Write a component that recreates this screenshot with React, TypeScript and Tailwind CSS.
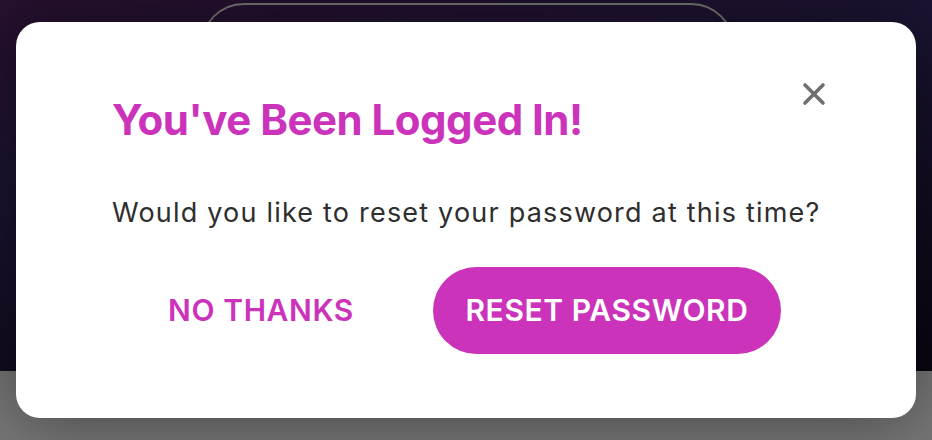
import { X } from "lucide-react";

export default function App() {
  const font = { fontFamily: "Inter, 'Noto Sans', sans-serif" };

  return (
    <div className="relative h-[440px] w-full overflow-hidden" style={font}>
      {/* page behind the dialog */}
      <div className="flex h-full flex-col">
        <div className="h-[371px] bg-[linear-gradient(170deg,#28102f_0%,#1b1433_35%,#0a0510_100%)] pl-[200px] pt-[3px]">
          <div className="h-[200px] w-[535px] rounded-[44px] border-2 border-[#767676]" />
        </div>
        <div className="flex-1 bg-[#777777]" />
      </div>

      {/* dialog */}
      <div className="absolute left-4 top-[22px] h-[396px] w-[900px] rounded-3xl bg-white pl-[96px] pt-[77px] shadow-[0_0_70px_rgba(0,0,0,0.45)]">
        <button className="absolute right-[84px] top-[54px] text-[#6f6f6f]">
          <X size={36} strokeWidth={2.4} />
        </button>

        <h2 className="text-[42px] font-bold leading-none tracking-[-0.5px] text-[#cc33bb]">
          You've Been Logged In!
        </h2>

        <p className="mt-[58px] text-[27px] leading-none tracking-[1.2px] text-[#2e2e2e]">
          Would you like to reset your password at this time?
        </p>

        <div className="mt-[41px] flex items-center gap-[46px] pl-[23px]">
          <button className="h-[87px] w-[252px] rounded-full text-[30px] font-semibold tracking-[0.6px] text-[#cc33bb]">
            NO THANKS
          </button>
          <button className="h-[87px] w-[348px] rounded-full bg-[#cc33bb] text-[30px] font-semibold tracking-[0.6px] text-white">
            RESET PASSWORD
          </button>
        </div>
      </div>
    </div>
  );
}
